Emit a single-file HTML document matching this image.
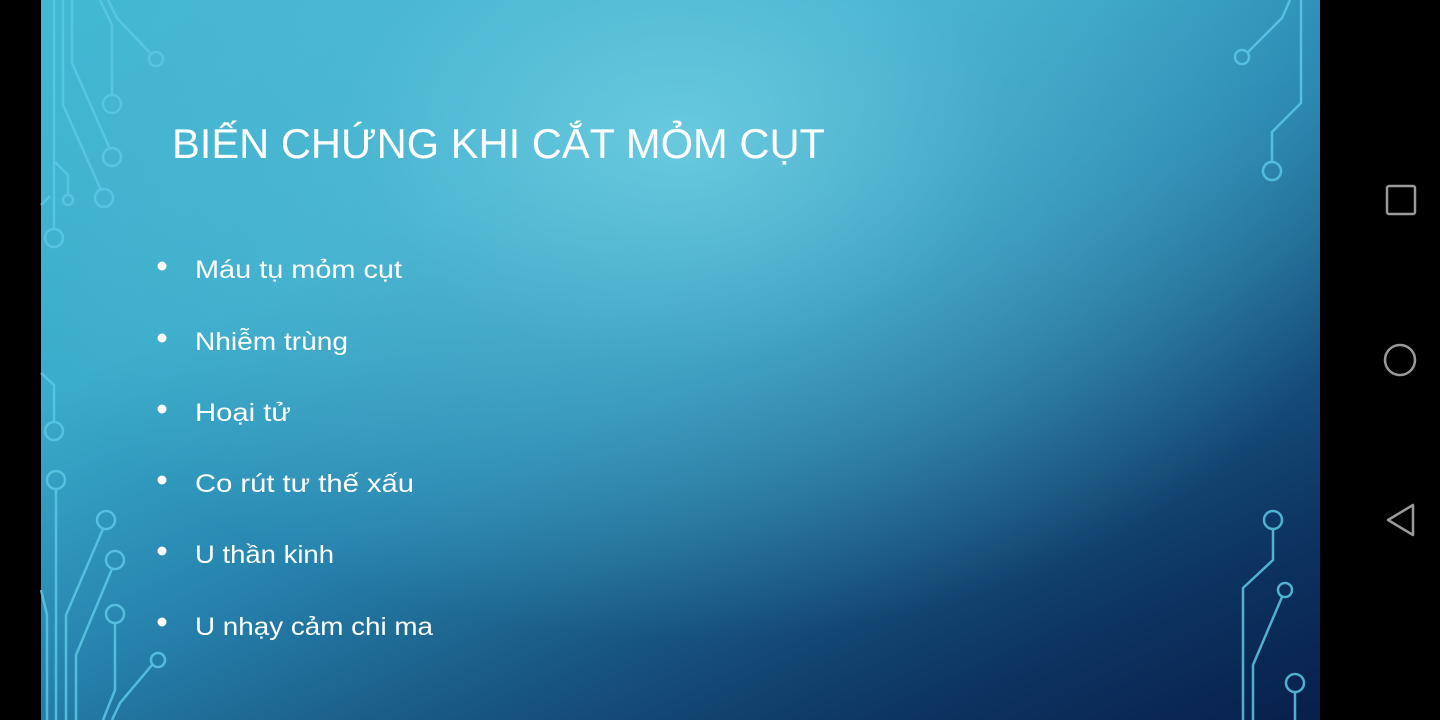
<!DOCTYPE html>
<html><head><meta charset="utf-8"><style>
html,body{margin:0;padding:0;background:#000;width:1440px;height:720px;overflow:hidden}
#s{position:absolute;left:41px;top:0;width:1279px;height:720px;
background:
radial-gradient(ellipse 720px 500px at 640px 140px, rgba(110,205,225,0.9) 0%, rgba(90,190,215,0.5) 45%, rgba(60,160,200,0) 100%),
linear-gradient(155deg,#40b8d2 0%,#3aaccb 30%,#2682ad 52%,#17557f 70%,#0d3463 85%,#081f4a 100%);}
svg{position:absolute;left:0;top:0}
</style></head><body>
<div id="s"></div>
<svg width="1440" height="720" viewBox="0 0 1440 720">
<g fill="none" stroke="#5cc8e6" stroke-width="2.5" opacity="0.85">
<path d="M54 0V230"/><path d="M63 0V105L101 190"/><path d="M72 0V63L110 149"/>
<path d="M100 0L112 25V95"/><path d="M108 0L117 18L150 53"/>
<path d="M55 162L68 175V195"/><path d="M41 205L50 196"/>
<circle cx="112" cy="104" r="9"/><circle cx="112" cy="157" r="9"/><circle cx="104" cy="198" r="9"/>
<circle cx="156" cy="59" r="7"/><circle cx="68" cy="200" r="5"/><circle cx="54" cy="238" r="9"/>
<path d="M41 373L54 385V422"/><circle cx="54" cy="431" r="9"/>
<path d="M56 489V720"/><circle cx="56" cy="480" r="9"/>
<path d="M103 529L66 615V720"/><circle cx="106" cy="520" r="9"/>
<path d="M112 569L76 655V720"/><circle cx="115" cy="560" r="9"/>
<path d="M115 623V690L103 720"/><circle cx="115" cy="614" r="9"/>
<path d="M152 665L120 703L112 720"/><circle cx="158" cy="660" r="7"/>
<path d="M41 590L47 615V720"/>
<path d="M1290 0L1282 18L1248 52"/><circle cx="1242" cy="57" r="7"/>
<path d="M1301 0V103L1272 132V162"/><circle cx="1272" cy="171" r="9"/>
<path d="M1273 529V560L1243 588V720"/><circle cx="1273" cy="520" r="9"/>
<path d="M1282 597L1253 665V720"/><circle cx="1285" cy="590" r="7"/>
<path d="M1295 692V720"/><circle cx="1295" cy="683" r="9"/>
</g>
<g font-family="Liberation Sans, sans-serif" fill="#fff">
<text x="172" y="158" font-size="42" textLength="653" lengthAdjust="spacingAndGlyphs">BIẾN CHỨNG KHI CẮT MỎM CỤT</text>
<g font-size="25">
<text x="195" y="278" textLength="207" lengthAdjust="spacingAndGlyphs">Máu tụ mỏm cụt</text>
<text x="195" y="350" textLength="153" lengthAdjust="spacingAndGlyphs">Nhiễm trùng</text>
<text x="195" y="421" textLength="96" lengthAdjust="spacingAndGlyphs">Hoại tử</text>
<text x="195" y="492" textLength="219" lengthAdjust="spacingAndGlyphs">Co rút tư thế xấu</text>
<text x="195" y="563" textLength="139" lengthAdjust="spacingAndGlyphs">U thần kinh</text>
<text x="195" y="635" textLength="238" lengthAdjust="spacingAndGlyphs">U nhạy cảm chi ma</text>
</g>
<circle cx="162" cy="266" r="4.5"/><circle cx="162" cy="338" r="4.5"/><circle cx="162" cy="409" r="4.5"/>
<circle cx="162" cy="480" r="4.5"/><circle cx="162" cy="551" r="4.5"/><circle cx="162" cy="622" r="4.5"/>
</g>
<g fill="none" stroke="#9a9a9a" stroke-width="2.5">
<rect x="1387" y="186" width="28" height="28" rx="2"/>
<circle cx="1400" cy="360" r="15"/>
<path d="M1413 505V535L1388 520Z" stroke-linejoin="round"/>
</g>
</svg>
</body></html>
